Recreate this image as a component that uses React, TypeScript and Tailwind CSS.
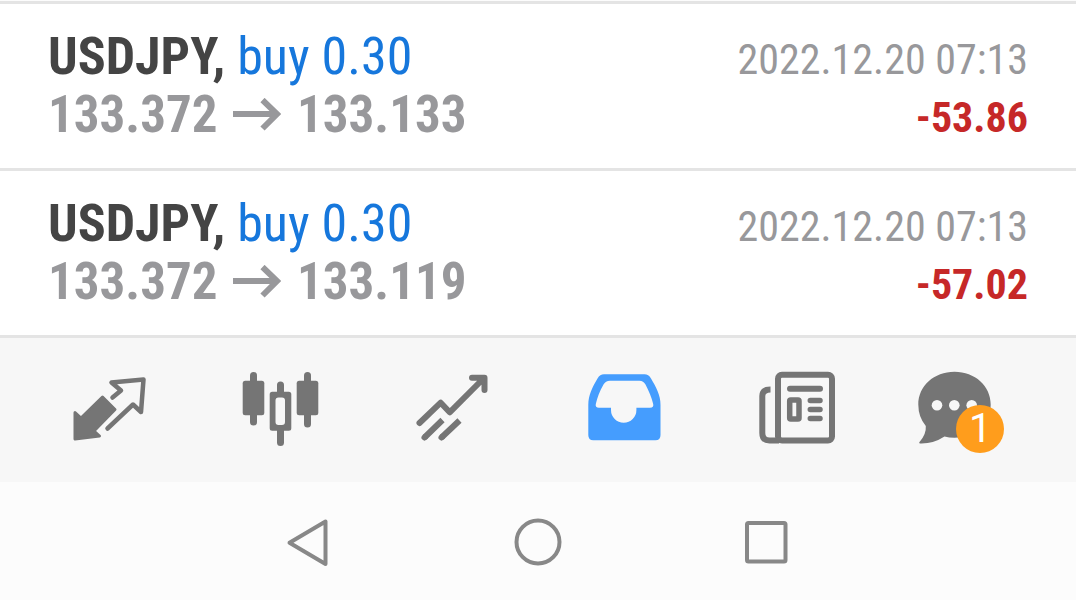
import React from 'react'

type Deal = {
  id: number
  symbol: string
  side: string
  open: string
  close: string
  time: string
  profit: string
}

const deals: Deal[] = [
  { id: 1, symbol: 'USDJPY', side: 'buy 0.30', open: '133.372', close: '133.133', time: '2022.12.20 07:13', profit: '-53.86' },
  { id: 2, symbol: 'USDJPY', side: 'buy 0.30', open: '133.372', close: '133.119', time: '2022.12.20 07:13', profit: '-57.02' },
]

const DealRow: React.FC<{ deal: Deal }> = ({ deal }) => (
  <li className="border-b-3 border-[#e4e4e4] py-6 px-12 whitespace-nowrap">
    <div className="flex items-baseline justify-between">
      <p className="text-[52px] leading-[58px] text-[#1677dc]">
        <strong className="font-bold text-[#444444]">{deal.symbol},</strong> {deal.side}
      </p>
      <time className="text-[42px] leading-none text-[#98989b]">{deal.time}</time>
    </div>
    <div className="flex items-baseline justify-between font-bold">
      <p className="text-[51px] leading-[58px] text-[#98989b]">
        {deal.open}{' '}
        <svg viewBox="0 0 48 34" className="inline-block align-baseline w-12 mx-1" fill="none" stroke="currentColor" strokeWidth="6">
          <path d="M0 16H44M29.500 2L44 16L29.500 30.500" />
        </svg>{' '}
        {deal.close}
      </p>
      <p className="text-[42px] leading-none text-[#c62828]">{deal.profit}</p>
    </div>
  </li>
)

const QuotesIcon = () => (
  <svg viewBox="0 0 96 96" className="size-24" strokeLinejoin="round" strokeLinecap="round">
    <path d="M13 50.500L19 56L40.500 35L53 47.500L32 69L37.500 74L13 77Z" fill="currentColor" stroke="currentColor" strokeWidth="3" />
    <path d="M50.500 35.500L59 28.500L49.500 20.500L81.500 17.500L79 50L71 42.500L45.500 66.500" fill="none" stroke="currentColor" strokeWidth="4.500" />
  </svg>
)

const ChartIcon = () => (
  <svg viewBox="0 0 96 96" className="size-24" fill="currentColor">
    <rect x="9.700" y="18.700" width="21.600" height="34.500" rx="2.500" />
    <rect x="17" y="10" width="7" height="53.500" rx="3.500" />
    <path fillRule="evenodd" d="M39.200 29.700H44V23a3.500 3.500 0 0 1 7 0V29.700H55.800a2.500 2.500 0 0 1 2.500 2.500V66.200a2.500 2.500 0 0 1-2.500 2.500H51V80.500a3.500 3.500 0 0 1-7 0V68.700H39.200a2.500 2.500 0 0 1-2.500-2.500V32.200a2.500 2.500 0 0 1 2.500-2.500ZM45.500 35.500a3 3 0 0 0-3 3V60a3 3 0 0 0 3 3H49a3 3 0 0 0 3-3V38.500a3 3 0 0 0-3-3Z" />
    <rect x="63.700" y="18.700" width="21.600" height="34.500" rx="2.500" />
    <rect x="71" y="10" width="7" height="55.500" rx="3.500" />
  </svg>
)

const TradeIcon = () => (
  <svg viewBox="0 0 96 96" className="size-24" fill="none" stroke="currentColor" strokeWidth="6" strokeLinejoin="round" strokeLinecap="round">
    <path d="M15.500 61L36.700 40.700L45.700 50.300L80 16M68 15.700H80.500V28" />
    <path d="M71 15.700H80.500V25Z" fill="currentColor" stroke="none" />
    <path d="M20.500 75.500L21 75M37.500 75.500L38 75" />
    <path d="M20.500 75.500L38.500 58M37.500 75.500L55.500 58.500" strokeLinecap="butt" />
  </svg>
)

const HistoryIcon = () => (
  <svg viewBox="0 0 96 96" className="size-24" fill="currentColor" fillRule="evenodd">
    <path d="M28 12.300H68.500Q72.500 12.300 75 16.500C80 25 84.500 33 84.500 43V73Q84.500 78.300 79.500 78.300H17.300Q12.300 78.300 12.300 73V43C12.300 33 16.500 25 21.500 16.500Q24 12.300 28 12.300ZM34 18.700Q29.500 18.700 27.500 22.500C23.500 29.500 21.500 35 19.800 42Q19 45.700 23 45.700H35V48A12.700 12.700 0 0 0 60.400 48V45.700H74Q78 45.700 77.200 42C75.500 35 73 29.500 69.500 22.500Q67.500 18.700 63.500 18.700Z" />
  </svg>
)

const NewsIcon = () => (
  <svg viewBox="0 0 96 96" className="size-24" fill="none" stroke="currentColor" strokeWidth="6">
    <rect x="31" y="12.700" width="54" height="65.800" rx="4" />
    <path d="M23.500 27.500Q15.300 27.500 15.300 34V71Q15.300 78.500 22.500 78.500H32" />
    <path d="M43 26.700H73" strokeLinecap="round" />
    <rect x="42.700" y="38" width="9.300" height="19" rx="1" strokeWidth="5.500" />
    <path d="M63.300 38.500H73M63.300 47.500H73M63.300 56.500H73" strokeLinecap="round" strokeWidth="5.500" />
  </svg>
)

const ChatIcon = () => (
  <svg viewBox="0 0 96 96" className="size-24">
    <path fill="currentColor" d="M36.500 9.700C57 9.700 72.700 24 72.700 42.500S57 75.700 36.500 75.700Q31 75.700 26.500 74.500Q15 82 2 81.500Q0.500 81 1.500 80Q8.500 72 7.800 64Q0.300 55 0.300 42.500C0.300 24 16 9.700 36.500 9.700Z" />
    <g fill="#f7f7f7">
      <circle cx="19" cy="43.300" r="5.300" />
      <circle cx="36.300" cy="43.300" r="5.300" />
      <circle cx="53.700" cy="43.300" r="5.300" />
    </g>
  </svg>
)

const tabs = [
  { label: 'Quotes', Icon: QuotesIcon },
  { label: 'Chart', Icon: ChartIcon },
  { label: 'Trade', Icon: TradeIcon },
  { label: 'History', Icon: HistoryIcon, active: true },
  { label: 'News', Icon: NewsIcon },
  { label: 'Messages', Icon: ChatIcon, badge: 1 },
]

const TabBar = () => (
  <nav className="grid grid-cols-6 bg-[#f7f7f7] px-6 py-6">
    {tabs.map(({ label, Icon, active, badge }) => (
      <button
        key={label}
        aria-label={label}
        className={`flex justify-center ${active ? 'text-[#459dfe]' : 'text-[#757575]'}`}
      >
        <span className="relative">
          <Icon />
          {badge && (
            <span className="absolute left-[38px] top-[43px] flex size-12 items-center justify-center rounded-full bg-[#ff9d1c] font-[Roboto,sans-serif] text-[40px] leading-none text-white">
              {badge}
            </span>
          )}
        </span>
      </button>
    ))}
  </nav>
)

const SystemBar = () => (
  <div className="flex justify-center gap-[180px] bg-[#fcfcfc] py-9 text-[#888888]">
    <button aria-label="Back">
      <svg viewBox="0 0 48 48" className="size-12" fill="none" stroke="currentColor" strokeWidth="4" strokeLinejoin="round">
        <path d="M39.500 3.500V46L3.500 24.700Z" />
      </svg>
    </button>
    <button aria-label="Home">
      <svg viewBox="0 0 48 48" className="size-12" fill="none" stroke="currentColor" strokeWidth="4">
        <circle cx="24" cy="24" r="21.500" />
      </svg>
    </button>
    <button aria-label="Recent apps">
      <svg viewBox="0 0 48 48" className="size-12" fill="none" stroke="currentColor" strokeWidth="4">
        <rect x="5" y="5" width="38.500" height="38.500" rx="1.500" />
      </svg>
    </button>
  </div>
)

export default function App() {
  return (
    <div className="flex min-h-screen flex-col bg-[#fcfcfc] pt-px font-['Roboto_Condensed','Liberation_Sans_Narrow',Roboto,sans-serif]">
      <ul className="border-t-3 border-[#e4e4e4] bg-white">
        {deals.map((deal) => (
          <DealRow key={deal.id} deal={deal} />
        ))}
      </ul>
      <TabBar />
      <SystemBar />
    </div>
  )
}
